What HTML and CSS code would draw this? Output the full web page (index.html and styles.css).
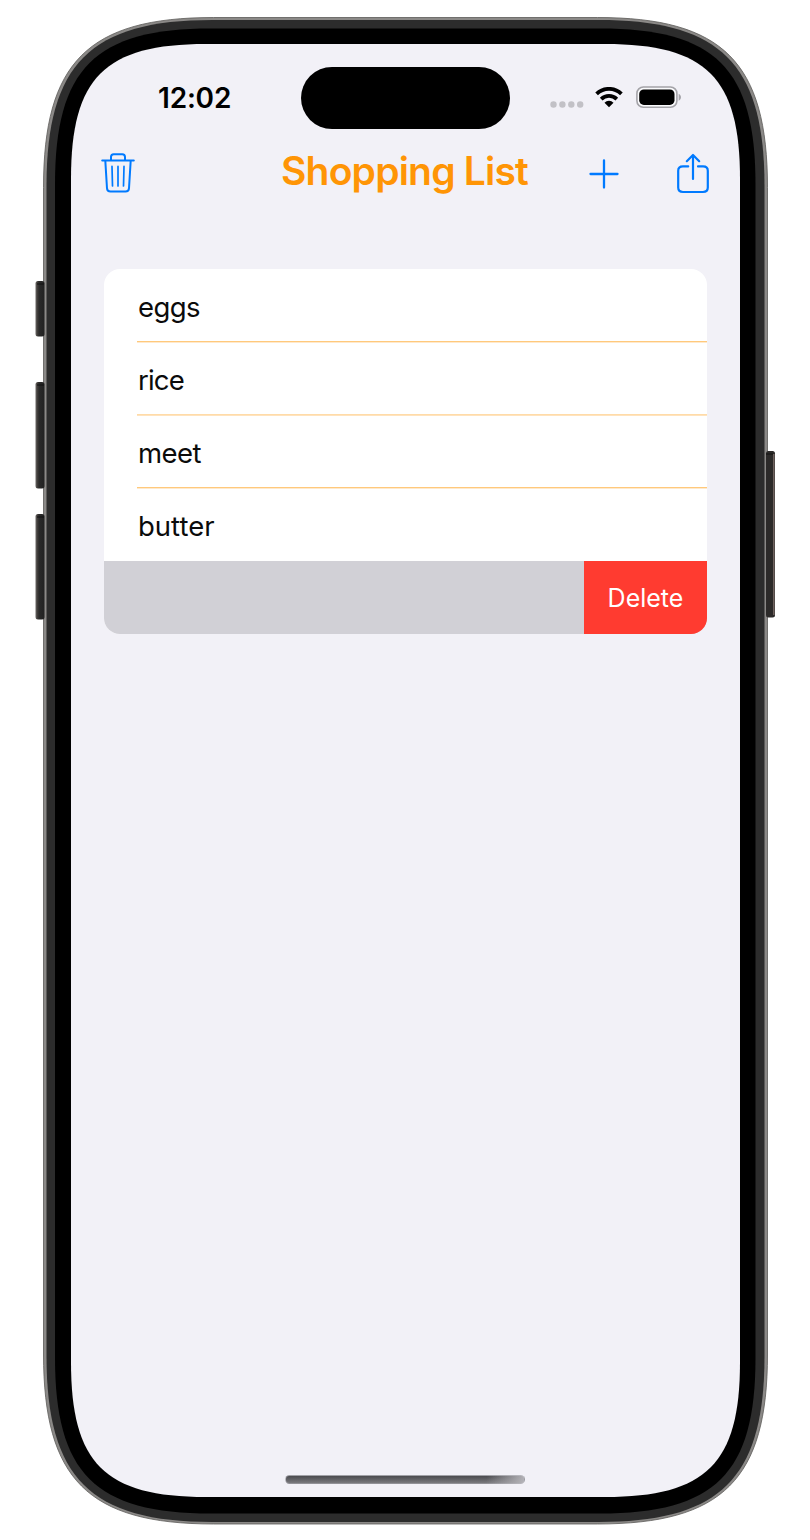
FILE: index.html
```html
<!DOCTYPE html>
<html lang="en">
<head>
<meta charset="utf-8">
<title>Shopping List</title>
<link rel="stylesheet" href="styles.css">
</head>
<body>
<div class="phone">
  <svg class="bezel" width="810" height="1540" viewBox="0 0 810 1540" aria-hidden="true">
    <defs>
      <linearGradient id="key" x1="0" x2="1" y1="0" y2="0">
        <stop offset="0" stop-color="#6b6866"/><stop offset=".25" stop-color="#3a3735"/><stop offset=".45" stop-color="#292929"/><stop offset="1" stop-color="#222"/>
      </linearGradient>
    </defs>
    <path fill="#8b8987" stroke="#5c5a58" stroke-width=".8" d="M43.500 187.500C43.500 62.200 88.200 17.500 213.500 17.500H597.500C722.800 17.500 767.500 62.200 767.500 187.500V1354C767.500 1479.300 722.800 1524 597.500 1524H213.500C88.200 1524 43.500 1479.300 43.500 1354Z"/>
    <rect x="35.500" y="281" width="9" height="55.500" rx="2.500" fill="url(#key)"/>
    <rect x="35.500" y="382" width="9" height="106.500" rx="2.500" fill="url(#key)"/>
    <rect x="35.500" y="514" width="9" height="105.500" rx="2.500" fill="url(#key)"/>
    <path d="M37 284H44M37 385H44M37 517H44" stroke="#111"/>
    <rect x="766" y="451" width="9" height="166.500" rx="2.500" fill="#2c2a29"/>
    <path d="M773.800 454V615" stroke="#6f625e" stroke-width="1.600"/>
    <path d="M766 454H773" stroke="#111"/>
    <path fill="#2c2c2c" d="M46.500 186C46.500 63.900 90.400 20 212.500 20H598.500C720.600 20 764.500 63.900 764.500 186V1356C764.500 1478.100 720.600 1522 598.500 1522H212.500C90.400 1522 46.500 1478.100 46.500 1356Z"/>
    <path fill="#000" d="M55 184.500C55 68.500 95 28.500 211 28.500H599.500C715.500 28.500 755.500 68.500 755.500 184.500V1357.500C755.500 1473.500 715.500 1513.500 599.500 1513.500H211C95 1513.500 55 1473.500 55 1357.500Z"/>
    <path fill="#f2f1f7" d="M71 179C71 77.700 104.700 44 206 44H605C706.300 44 740 77.700 740 179V1362C740 1463.300 706.300 1497 605 1497H206C104.700 1497 71 1463.300 71 1362Z"/>
  </svg>
  <main class="screen">
    <header class="status">
      <span class="time">12:02</span>
      <div class="island"></div>
      <div class="indicators">
        <svg class="dots" width="34" height="8" viewBox="0 0 34 8"><g fill="#c2c1c6"><circle cx="3.500" cy="3.500" r="3.200"/><circle cx="12.400" cy="3.500" r="3.200"/><circle cx="21.300" cy="3.500" r="3.200"/><circle cx="30.200" cy="3.500" r="3.200"/></g></svg>
        <svg class="wifi" width="28" height="21" viewBox="0 0 28 21"><g fill="none" stroke="#000" stroke-width="3.800"><path d="M1.600 6.900a17.700 17.700 0 0 1 24.800 0"/><path d="M6.200 12.100a11.200 11.200 0 0 1 15.600 0"/></g><path d="M9.500 15.700a6.400 6.400 0 0 1 9 0L14 20.200Z"/></svg>
        <svg class="battery" width="46" height="23" viewBox="0 0 46 23"><rect x=".9" y="1" width="40" height="20.300" rx="6.500" fill="#fafafc" stroke="#a4a3a8" stroke-width="1.600"/><rect x="3.200" y="3.500" width="35.300" height="15.400" rx="4.600"/><path d="M42.700 7.800c3 1.400 3 5.600 0 7Z" fill="#a4a3a8"/></svg>
      </div>
    </header>
    <nav class="toolbar">
      <svg class="trash" width="34" height="42" viewBox="0 0 34 42" fill="none" stroke="#007aff" stroke-width="2" stroke-linecap="round" stroke-linejoin="round"><path d="M1.200 8.600H32.800M10 8V5Q10 2.200 12.700 2.200H21.300Q24 2.200 24 5V8M4.300 8.600L6 36.200Q6.200 39.600 9.500 39.600H24.500Q27.800 39.600 28 36.200L29.700 8.600"/><path stroke-width="1.700" d="M11 14.400L11.500 34M17 14.400V34M23 14.400L22.500 34"/></svg>
      <h1 class="title">Shopping List</h1>
      <svg class="plus" width="30" height="30" viewBox="0 0 30 30" fill="none" stroke="#007aff" stroke-width="2.300" stroke-linecap="round"><path d="M15 1.500V28.500M1.500 15H28.500"/></svg>
      <svg class="share" width="33" height="41" viewBox="0 0 33 41" fill="none" stroke="#007aff" stroke-width="2.200" stroke-linecap="round" stroke-linejoin="round"><path d="M11.200 13.400H6Q1.200 13.400 1.200 17.800V34.600Q1.200 39 6 39H26Q30.800 39 30.800 34.600V17.800Q30.800 13.400 26 13.400H21M16 26V2M9.800 8.200L16 2L22.200 8.200"/></svg>
    </nav>
    <ul class="list">
      <li class="item"><span class="name">eggs</span></li>
      <li class="item"><span class="name soft">rice</span></li>
      <li class="item"><span class="name">meet</span></li>
      <li class="item"><span class="name last">butter</span></li>
      <li class="item swiped"><button class="delete">Delete</button></li>
    </ul>
    <div class="home"></div>
  </main>
</div>
</body>
</html>
```
FILE: styles.css
```css
* { box-sizing: border-box; }
body {
  margin: 0;
  background: #fff;
  font-family: Inter, "Liberation Sans", sans-serif;
}
svg { display: block; flex: none; }
.phone {
  position: relative;
  width: 810px;
  height: 1540px;
  padding: 44px 70px 43px 71px;
}
.bezel { position: absolute; inset: 0; }
.screen {
  position: relative;
  display: flex;
  flex-direction: column;
  height: 1453px;
}
.status {
  display: flex;
  align-items: center;
  height: 108px;
}
.time {
  width: 143px;
  margin-left: 87px;
  font-size: 28px;
  font-weight: 600;
  letter-spacing: -.2px;
  line-height: 34px;
}
.island {
  width: 209px;
  height: 62px;
  border-radius: 31px;
  background: #000;
}
.indicators {
  display: flex;
  align-items: center;
  margin-left: 40px;
}
.dots { margin-top: 13px; }
.wifi { margin: -2px 0 0 11px; }
.battery { margin: -2px 0 0 13px; }
.toolbar {
  display: flex;
  height: 117px;
  padding-left: 30px;
}
.title {
  width: 308px;
  margin: -5px 0 0 146px;
  color: #ff9505;
  font-size: 39px;
  font-weight: 600;
  letter-spacing: -.8px;
  line-height: 48px;
  white-space: nowrap;
}
.plus { margin-top: 7px; }
.share { margin: 1px 0 0 58px; }
.list {
  width: 603px;
  margin: 0 0 0 33px;
  padding: 0;
  overflow: hidden;
  border-radius: 16px;
  background: #fff;
  list-style: none;
}
.item {
  display: flex;
  height: 73px;
  padding-left: 33px;
}
.name {
  flex: 1;
  padding: 20px 0 0 1px;
  border-bottom: 1px solid #ffc97c;
  box-shadow: 0 1px #ffe9cc;
  color: #0b0b0b;
  font-size: 27.500px;
  letter-spacing: -.55px;
  line-height: 36px;
}
.soft {
  border-color: #ffdba8;
  box-shadow: 0 1px #ffe3bd;
  letter-spacing: -.8px;
}
.last {
  border-bottom: 0;
  box-shadow: none;
  letter-spacing: 0;
}
.swiped {
  justify-content: flex-end;
  padding: 0;
  background: #d1d0d6;
}
.delete {
  width: 123px;
  border: 0;
  padding: 0;
  background: #ff3b30;
  color: #fff;
  font: 400 25px/36px Inter, "Liberation Sans", sans-serif;
}
.home {
  width: 240px;
  height: 9px;
  margin: auto 0 13px 214px;
  border: 1px solid rgba(190, 190, 196, .6);
  border-radius: 5px;
  background: linear-gradient(100deg, transparent 84%, #b4b3b8 100%), linear-gradient(#4b4b4f, #79797d);
}
```
